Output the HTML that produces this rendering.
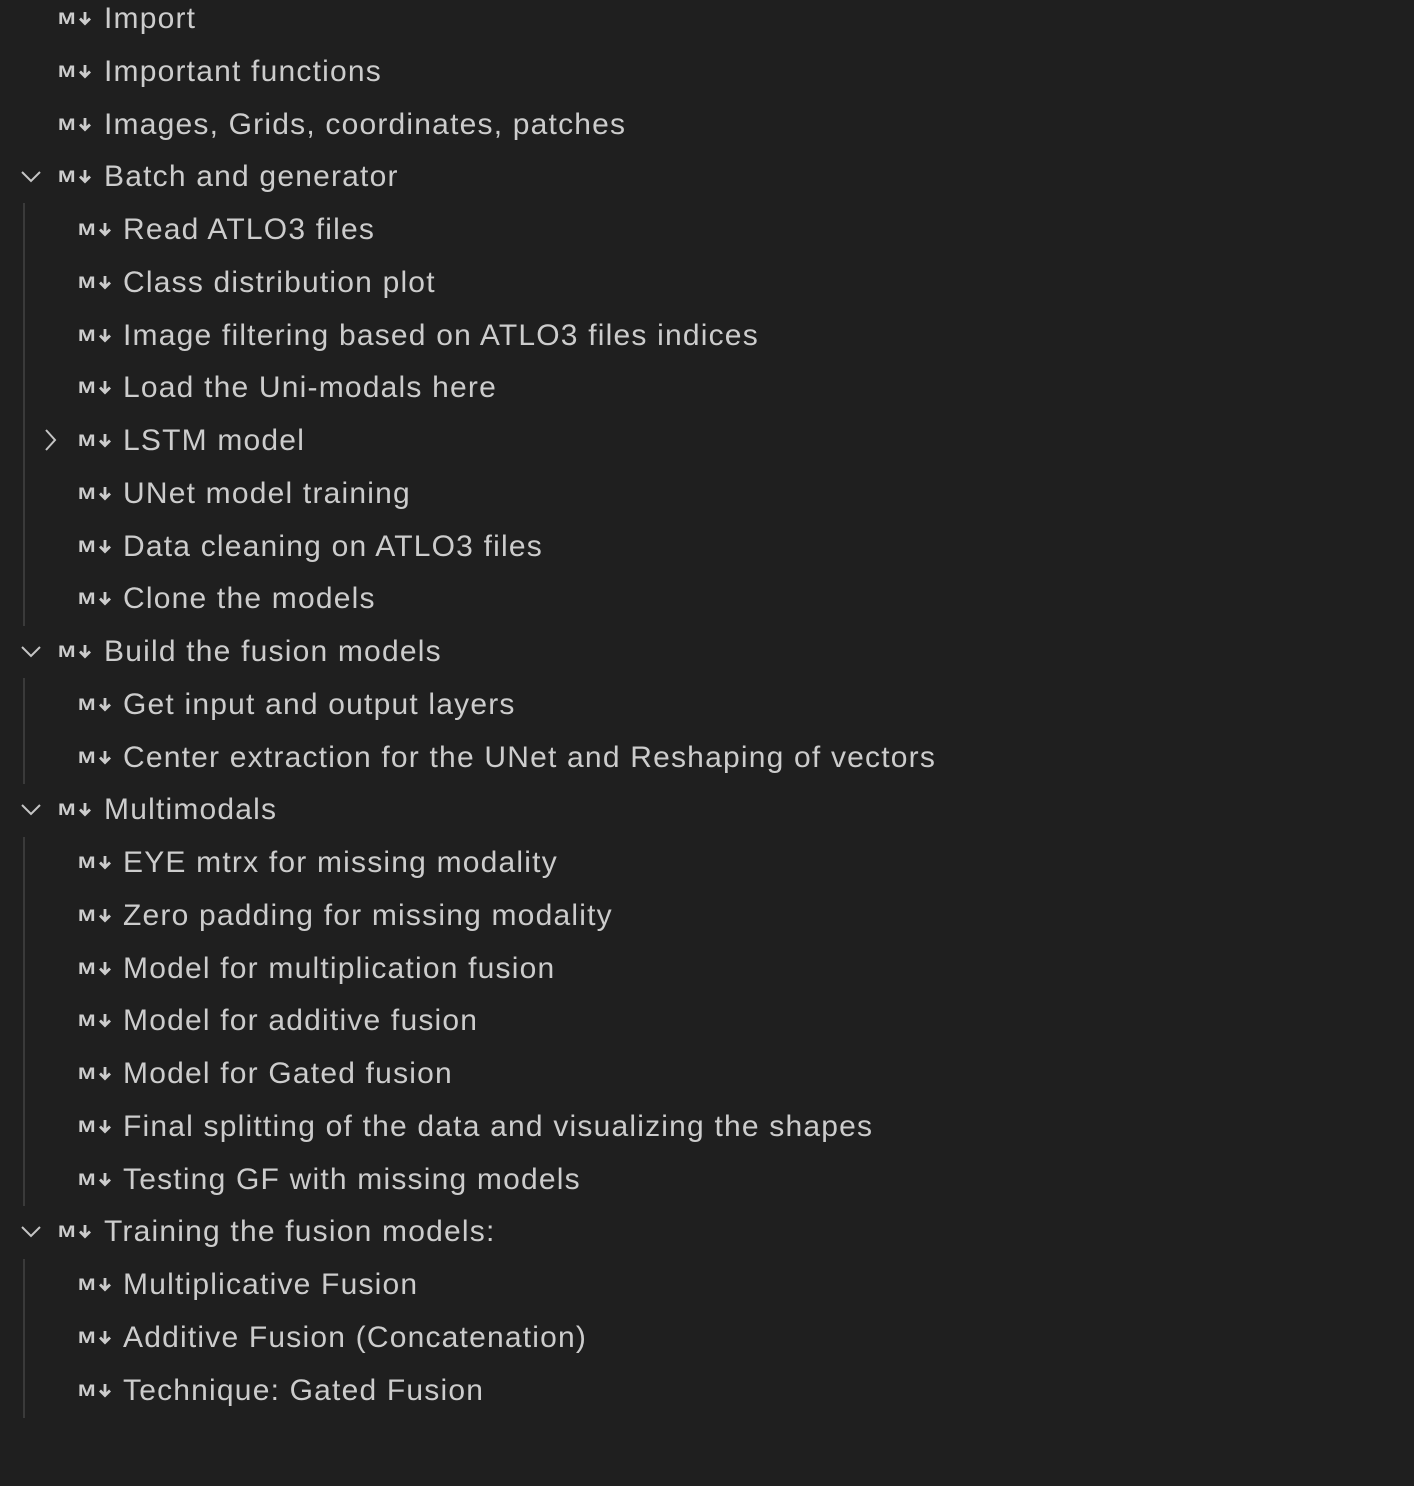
<!DOCTYPE html>
<html><head><meta charset="utf-8"><style>
html,body{margin:0;padding:0;background:#1f1f1f;width:1414px;height:1486px;overflow:hidden;}
body{position:relative;font-family:"Liberation Sans",sans-serif;color:#cccccc;}
.r{position:absolute;left:0;height:40px;line-height:40px;font-size:30px;letter-spacing:1.2px;white-space:nowrap;}
.t{position:absolute;top:1px;}
.ic{position:absolute;top:11px;width:36px;height:18px;}
.g{position:absolute;left:23px;width:2px;background:#3a3a3a;}
.ch{position:absolute;top:8px;width:24px;height:24px;}
</style></head><body>
<div class="g" style="top:203px;height:423px"></div>
<div class="g" style="top:678px;height:106px"></div>
<div class="g" style="top:837px;height:369px"></div>
<div class="g" style="top:1259px;height:159px"></div>
<svg width="0" height="0" style="position:absolute"><defs>
<g id="md"><text x="0" y="15" font-family="Liberation Sans" font-weight="bold" font-size="17" textLength="19" lengthAdjust="spacingAndGlyphs" fill="#cccccc">M</text><path d="M27 3v11M22 9.5l5 5 5-5" stroke="#cccccc" stroke-width="2.8" fill="none"/></g>
<path id="cd" d="M3 8l9 9 9-9" stroke="#c5c5c5" stroke-width="2" fill="none"/>
<path id="cr" d="M8 2l9 10-9 10" stroke="#c5c5c5" stroke-width="2" fill="none"/>
</defs></svg>
<div id="rows"></div>
<script>
const rows=[
[1,"Import"],[1,"Important functions"],[1,"Images, Grids, coordinates, patches"],[1,"Batch and generator","d"],
[2,"Read ATLO3 files"],[2,"Class distribution plot"],[2,"Image filtering based on ATLO3 files indices"],[2,"Load the Uni-modals here"],[2,"LSTM model","r"],[2,"UNet model training"],[2,"Data cleaning on ATLO3 files"],[2,"Clone the models"],
[1,"Build the fusion models","d"],[2,"Get input and output layers"],[2,"Center extraction for the UNet and Reshaping of vectors"],
[1,"Multimodals","d"],[2,"EYE mtrx for missing modality"],[2,"Zero padding for missing modality"],[2,"Model for multiplication fusion"],[2,"Model for additive fusion"],[2,"Model for Gated fusion"],[2,"Final splitting of the data and visualizing the shapes"],[2,"Testing GF with missing models"],
[1,"Training the fusion models:","d"],[2,"Multiplicative Fusion"],[2,"Additive Fusion (Concatenation)"],[2,"Technique: Gated Fusion"]];
let h="";
rows.forEach((r,i)=>{
 const c=18+i*52.75; const top=c-20;
 const ix=r[0]==1?58:78, tx=r[0]==1?104:123;
 let ch="";
 if(r[2]=="d") ch=`<svg class="ch" style="left:19px" viewBox="0 0 24 24"><use href="#cd"/></svg>`;
 if(r[2]=="r") ch=`<svg class="ch" style="left:38px" viewBox="0 0 24 24"><use href="#cr"/></svg>`;
 h+=`<div class="r" style="top:${top}px">${ch}<svg class="ic" style="left:${ix}px" viewBox="0 0 36 18"><use href="#md"/></svg><span class="t" style="left:${tx}px">${r[1]}</span></div>`;
});
document.getElementById("rows").innerHTML=h;
</script>
</body></html>
